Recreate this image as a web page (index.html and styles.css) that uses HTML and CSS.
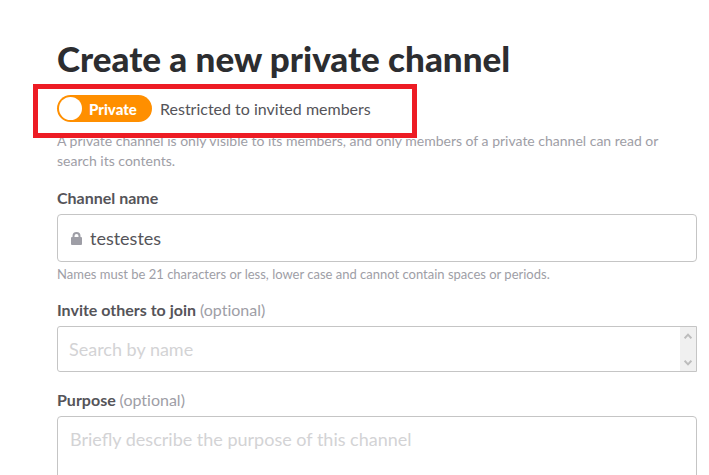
FILE: index.html
```html
<!DOCTYPE html>
<html lang="en">
<head>
<meta charset="utf-8">
<title>Create a new private channel</title>
<link rel="stylesheet" href="styles.css">
</head>
<body>
<main class="page">
  <h1 class="title">Create a new private channel</h1>
  <form class="form">
    <div class="privacy">
      <button class="toggle" type="button" role="switch" aria-checked="true" aria-describedby="privacy-text"><span class="toggle-knob"></span>Private</button>
      <span id="privacy-text">Restricted to invited members</span>
      <div class="highlight" aria-hidden="true"></div>
    </div>
    <p class="description">A private channel is only visible to its members, and only members of a private channel can read or search its contents.</p>

    <div class="field">
      <label class="label" for="name">Channel name</label>
      <div class="box name-box">
        <svg class="lock" viewBox="0 0 11 13" aria-hidden="true"><path fill="none" stroke="currentColor" stroke-width="2" d="M2.5 6V4a3 3 0 0 1 6 0v2"/><rect y="5" width="11" height="8" rx="1" fill="currentColor"/></svg>
        <input class="control" id="name" type="text" value="testestes">
      </div>
      <p class="hint">Names must be 21 characters or less, lower case and cannot contain spaces or periods.</p>
    </div>

    <div class="field">
      <label class="label" for="invite">Invite others to join <span class="optional">(optional)</span></label>
      <div class="box invite-box">
        <input class="control" id="invite" type="text" placeholder="Search by name">
        <div class="scroller" aria-hidden="true">
          <svg class="arrow" viewBox="0 0 8 6"><path d="M.6 5.2L4 1.6l3.4 3.6"/></svg>
          <svg class="arrow" viewBox="0 0 8 6"><path d="M.6.8L4 4.4 7.4.8"/></svg>
        </div>
      </div>
    </div>

    <div class="field">
      <label class="label" for="purpose">Purpose <span class="optional">(optional)</span></label>
      <textarea class="box control purpose" id="purpose" rows="3" placeholder="Briefly describe the purpose of this channel"></textarea>
    </div>
  </form>
</main>
</body>
</html>
```
FILE: styles.css
```css
* {
  box-sizing: border-box;
}

body {
  height: 100vh;
  margin: 0;
  overflow: hidden;
  background: #fff;
  color: #555459;
  font-family: Lato, "Liberation Sans", sans-serif;
  font-size: 16px;
}

.page {
  padding: 35px 12px 0 57px;
}

.title {
  margin: 0 0 14px;
  color: #2c2d30;
  font-size: 35px;
  font-weight: 900;
  line-height: 46px;
}

.privacy {
  position: relative;
  display: flex;
  align-items: center;
  gap: 8px;
  height: 27px;
}

.toggle {
  display: flex;
  align-items: center;
  gap: 7px;
  width: 95px;
  height: 27px;
  padding: 0 2px;
  border: 0;
  border-radius: 14px;
  background: #ff8f00;
  color: #fff;
  font: 900 15px/20px Lato, "Liberation Sans", sans-serif;
}

.toggle-knob {
  width: 23px;
  height: 23px;
  border-radius: 50%;
  background: #fff;
}

.highlight {
  position: absolute;
  top: -11px;
  left: -24px;
  width: 384px;
  height: 54px;
  border: 5px solid #ed1c24;
  pointer-events: none;
}

.description {
  margin: 9px 0 15px;
  color: #9e9ea6;
  font-size: 14px;
  line-height: 20px;
}

.field {
  margin-bottom: 16px;
}

.label {
  display: block;
  margin-bottom: 4px;
  font-weight: 700;
  line-height: 24px;
}

.optional {
  color: #9e9ea6;
  font-weight: 400;
  font-variant-ligatures: none;
}

.box {
  display: flex;
  width: 100%;
  border: 1px solid #c5c5c5;
  border-radius: 4px;
  background: #fff;
}

.control {
  min-width: 0;
  outline: 0;
  color: #555459;
  font: 400 18px/24px Lato, "Liberation Sans", sans-serif;
}

input.control {
  flex: 1;
  padding: 0;
  border: 0;
  background: none;
}

.control::placeholder {
  color: #d3d3d5;
  opacity: 1;
}

.name-box {
  align-items: center;
  gap: 8px;
  height: 48px;
  padding: 0 12px 0 13px;
}

.lock {
  width: 11px;
  height: 13px;
  color: #9e9ea6;
}

.hint {
  margin: 4px 0 0;
  color: #9e9ea6;
  font-size: 13px;
  line-height: 16px;
}

.invite-box {
  height: 46px;
  padding-left: 11px;
  border-radius: 3px 0 0 3px;
}

.scroller {
  display: flex;
  flex-direction: column;
  align-items: center;
  justify-content: space-between;
  width: 16px;
  padding: 6px 0 5px;
  background: #f0f0f0;
}

.arrow {
  width: 8px;
  height: 6px;
  fill: none;
  stroke: #bcbcbc;
  stroke-width: 2;
}

.purpose {
  display: block;
  padding: 10px 12px;
  resize: none;
}
```
